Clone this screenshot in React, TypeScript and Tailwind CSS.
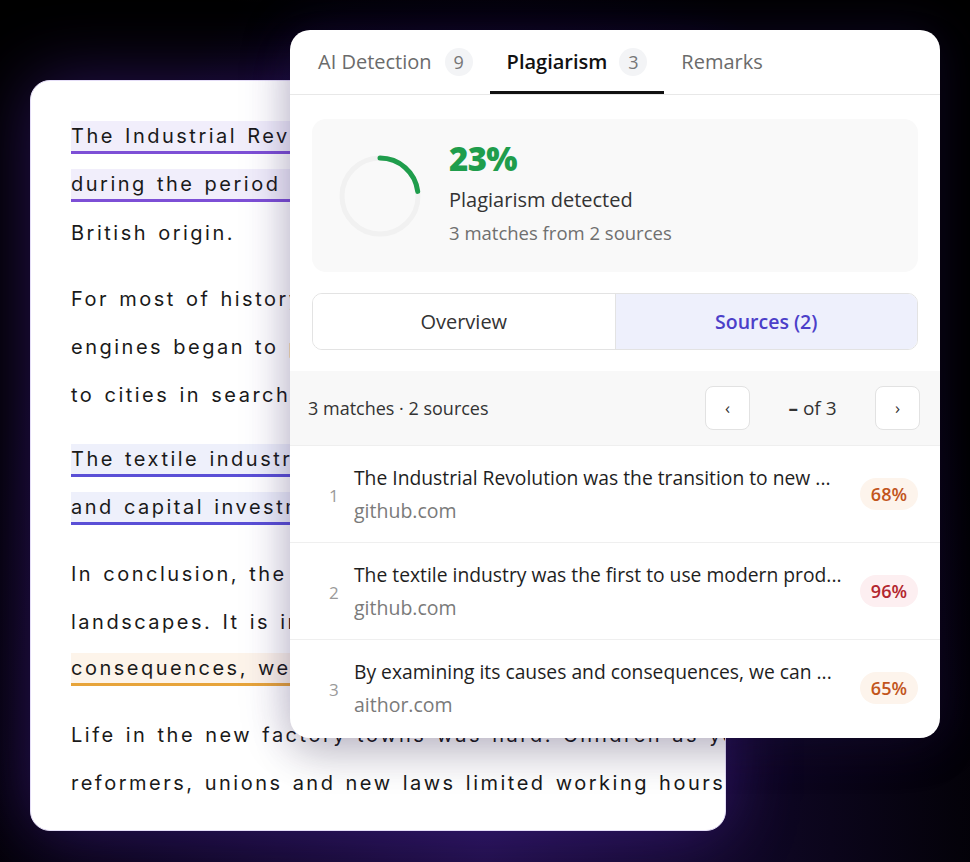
import React from 'react';

const docFont = { fontFamily: 'Inter, "DejaVu Sans", sans-serif' };
const uiFont = { fontFamily: '"Open Sans", "Noto Sans", sans-serif' };

type Line = { text: string; mark?: 'purple' | 'indigo' | 'orange' };

const paragraphs: Line[][] = [
  [
    { text: 'The Industrial Revolution was the transition to new manufacturing processes in', mark: 'purple' },
    { text: 'during the period from about 1760 to 1840. Many of its innovations were of', mark: 'purple' },
    { text: 'British origin.' },
  ],
  [
    { text: 'For most of history, people lived and worked on farms, until steam' },
    { text: 'engines began to power factories and millions of workers moved' },
    { text: 'to cities in search of jobs and better wages.' },
  ],
  [
    { text: 'The textile industry was the first to use modern production methods,', mark: 'indigo' },
    { text: 'and capital investment transformed how cloth was made.', mark: 'indigo' },
  ],
  [
    { text: 'In conclusion, the Industrial Revolution reshaped economies, societies and' },
    { text: 'landscapes. It is impossible to understand the modern world without it.' },
    { text: 'consequences, we can better understand the world we live in today.', mark: 'orange' },
  ],
  [
    { text: 'Life in the new factory towns was hard. Children as young as five worked until' },
    { text: 'reformers, unions and new laws limited working hours and improved conditions.' },
  ],
];

const markClass: Record<string, string> = {
  purple: 'bg-[#f1eefb] border-b-[3px] border-[#7d4fd6]',
  indigo: 'bg-[#eef0fb] border-b-[3px] border-[#5a4fd6]',
  orange: 'bg-[#fdf4ea] border-b-[3px] border-[#e7a43a]',
};

const sources = [
  { n: 1, title: 'The Industrial Revolution was the transition to new ...', domain: 'github.com', pct: '68%', tone: 'orange' },
  { n: 2, title: 'The textile industry was the first to use modern prod...', domain: 'github.com', pct: '96%', tone: 'red' },
  { n: 3, title: 'By examining its causes and consequences, we can ...', domain: 'aithor.com', pct: '65%', tone: 'orange' },
];

function Ring() {
  const r = 38;
  const c = 2 * Math.PI * r;
  return (
    <svg width="86" height="86" viewBox="0 0 86 86" className="shrink-0">
      <circle cx="43" cy="43" r={r} fill="none" stroke="#f1f1f1" strokeWidth="5" />
      <circle
        cx="43"
        cy="43"
        r={r}
        fill="none"
        stroke="#1f9d4c"
        strokeWidth="5"
        strokeLinecap="round"
        strokeDasharray={`${c * 0.23} ${c}`}
        transform="rotate(-90 43 43)"
      />
    </svg>
  );
}

function Badge({ children }: { children: React.ReactNode }) {
  return (
    <span className="w-[28px] h-[28px] rounded-full bg-[#f3f4f6] text-[#777] text-[18px] font-normal flex items-center justify-center">
      {children}
    </span>
  );
}

const App: React.FC = () => {
  return (
    <div className="relative w-[970px] h-[862px] overflow-hidden bg-[radial-gradient(ellipse_at_50%_100%,#1f0f45_0%,#0d0620_45%,#000000_80%)]">
      {/* document card */}
      <div
        className="ml-[30px] mt-[80px] w-[696px] h-[751px] rounded-[20px] bg-white overflow-hidden border border-[#e4ddf7] shadow-[0_0_70px_rgba(88,40,190,0.45)] pl-[40px] pt-[32px] text-[20px] text-[#1a1a1a] tracking-[0.125em] [word-spacing:0.1em]"
        style={docFont}
      >
        <div className="flex flex-col gap-[17.5px]">
          {paragraphs.map((p, i) => (
            <div key={i} className="flex flex-col">
              {p.map((l, j) => (
                <div key={j} className="h-[48px] flex items-center">
                  <span className={`whitespace-nowrap leading-[30px] ${l.mark ? markClass[l.mark] : ''}`}>{l.text}</span>
                </div>
              ))}
            </div>
          ))}
        </div>
      </div>

      {/* plagiarism panel */}
      <div
        className="absolute left-[290px] top-[30px] w-[650px] h-[708px] rounded-[20px] bg-white overflow-hidden shadow-[0_18px_40px_rgba(0,0,0,0.16),0_0_50px_rgba(60,30,140,0.25)]"
        style={uiFont}
      >
        <div className="flex items-stretch h-[65px] pl-[11px] border-b border-[#e8e8e8]">
          <div className="flex items-center gap-[13px] px-[17px] text-[20px] text-[#6b6b6b]">
            AI Detection <Badge>9</Badge>
          </div>
          <div className="flex items-center gap-[12px] px-[17px] text-[20px] font-semibold text-[#111] border-b-[3px] border-[#111] pt-[3px]">
            Plagiarism <Badge>3</Badge>
          </div>
          <div className="flex items-center px-[17px] text-[20px] text-[#6b6b6b]">Remarks</div>
        </div>

        <div className="px-[22px] pt-[24px]">
          <div className="h-[153px] rounded-[14px] bg-[#f9f9f9] flex items-center pl-[25px] gap-[26px]">
            <Ring />
            <div className="flex flex-col pb-[7px]">
              <span className="text-[33px] font-extrabold text-[#1f9d4c] leading-[40px] tracking-[-0.02em]">23%</span>
              <span className="text-[20px] font-medium text-[#333] mt-[7px] leading-[28px]">Plagiarism detected</span>
              <span className="text-[18.5px] text-[#6f6f6f] mt-[6px] leading-[26px]">3 matches from 2 sources</span>
            </div>
          </div>

          <div className="mt-[21px] h-[57px] rounded-[10px] border border-[#e3e3e3] flex overflow-hidden">
            <div className="flex-1 flex items-center justify-center text-[20px] font-medium text-[#333] bg-white">Overview</div>
            <div className="flex-1 flex items-center justify-center text-[19.5px] font-semibold text-[#4c3fc9] bg-[#eef0fc] border-l border-[#e3e3e3]">
              Sources (2)
            </div>
          </div>
        </div>

        <div className="mt-[21px] h-[74px] bg-[#f8f8f8] flex items-center pl-[18px] pr-[20px]">
          <span className="text-[18px] font-medium text-[#333]">3 matches · 2 sources</span>
          <div className="ml-auto flex items-center">
            <button className="w-[45px] h-[44px] rounded-[8px] bg-white border border-[#e2e2e2] text-[#333] text-[17px]">‹</button>
            <span className="w-[125px] text-center text-[19px] text-[#333]">
              <b>–</b> of 3
            </span>
            <button className="w-[45px] h-[44px] rounded-[8px] bg-white border border-[#e2e2e2] text-[#333] text-[17px]">›</button>
          </div>
        </div>

        <div className="flex flex-col">
          {sources.map((s) => (
            <div key={s.n} className="h-[97px] flex items-center pl-[39px] pr-[22px] border-t border-[#efefef]">
              <span className="w-[14px] text-[17px] text-[#9a9a9a] pt-[4px]">{s.n}</span>
              <div className="ml-[11px] flex flex-col gap-[9px]">
                <span className="text-[19.3px] text-[#1e1e1e] leading-[24px]">{s.title}</span>
                <span className="text-[19.5px] text-[#7a7a7a] leading-[24px]">{s.domain}</span>
              </div>
              <span
                className={`ml-auto h-[32px] px-[11px] rounded-full flex items-center text-[18px] font-semibold ${
                  s.tone === 'red' ? 'bg-[#fdeff1] text-[#b3262e]' : 'bg-[#fdf4ec] text-[#c2551c]'
                }`}
              >
                {s.pct}
              </span>
            </div>
          ))}
        </div>
      </div>
    </div>
  );
};

export default App;
